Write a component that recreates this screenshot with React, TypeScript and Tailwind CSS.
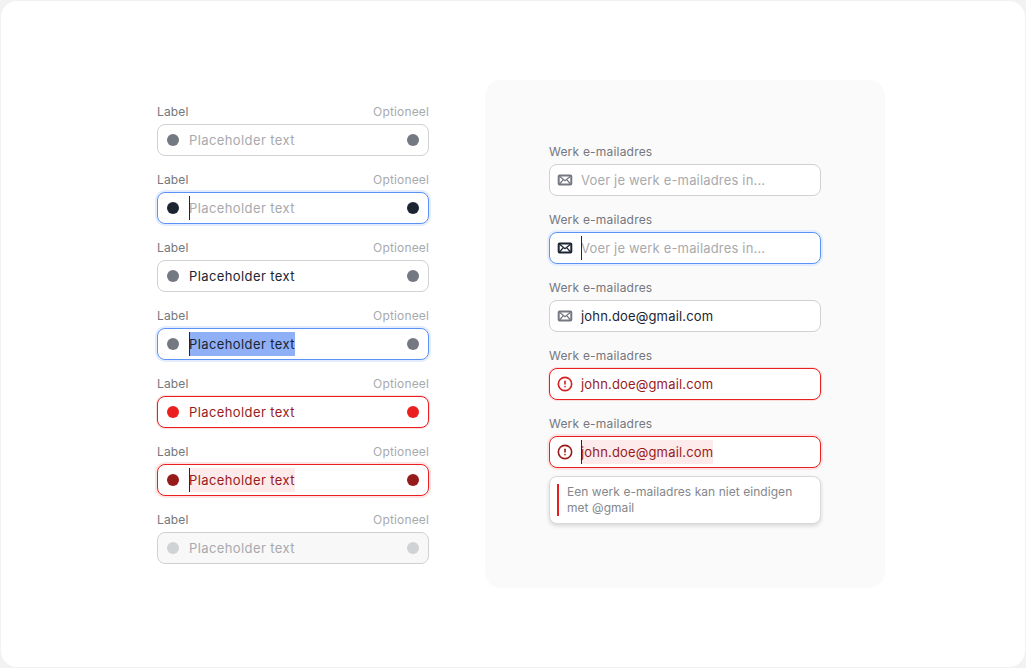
import { CircleAlert } from "lucide-react";

const font = { fontFamily: "Inter" };

function MailIcon({ className }: { className: string }) {
  return (
    <svg viewBox="0 0 16 16" className={className} fill="none">
      <rect x="1.7" y="3.4" width="12.6" height="9.2" rx="0.8" stroke="currentColor" strokeWidth="2" />
      <path d="M2.5 4.2l5.5 4.5 5.5-4.5M2.5 12l3.8-4.4M13.5 12L9.7 7.6" stroke="currentColor" strokeWidth="1.3" />
    </svg>
  );
}

function Caret() {
  return <span className="absolute left-0 top-0 h-[24px] w-px bg-[#1f2937]" />;
}

type LeftRow = {
  box: string;
  dot: string;
  text: string;
  caret?: boolean;
  hl?: string;
};

const leftRows: LeftRow[] = [
  { box: "border-[#d1d1d1] bg-white", dot: "bg-[#747881]", text: "text-[#a8a9ad]" },
  {
    box: "border-[#5b92f7] bg-white shadow-[0_0_0_2px_#e4edfd]",
    dot: "bg-[#1b2432]",
    text: "text-[#a8a9ad]",
    caret: true,
  },
  { box: "border-[#d1d1d1] bg-white", dot: "bg-[#747881]", text: "text-[#1b2432]" },
  {
    box: "border-[#5b92f7] bg-white shadow-[0_0_0_2px_#e4edfd]",
    dot: "bg-[#747881]",
    text: "text-[#1b2432]",
    caret: true,
    hl: "bg-[#8fb0f6]",
  },
  { box: "border-[#ea2020] bg-white shadow-[0_0_0_1px_#fbdcdc]", dot: "bg-[#ea2020]", text: "text-[#981b1b]" },
  {
    box: "border-[#ea2020] bg-white shadow-[0_0_0_2px_#fde3e3]",
    dot: "bg-[#961b1b]",
    text: "text-[#981b1b]",
    caret: true,
    hl: "bg-[#fdeaea]",
  },
  { box: "border-[#d1d1d1] bg-[#f8f8f8]", dot: "bg-[#d1d2d4]", text: "text-[#a8a9ad]" },
];

function LabelledRow({ row }: { row: LeftRow }) {
  return (
    <div className="flex flex-col gap-1">
      <div className="flex h-4 items-center justify-between text-[12px] leading-4 tracking-[0.15px]">
        <span className="text-[#74777d]">Label</span>
        <span className="text-[#a8aaae]">Optioneel</span>
      </div>
      <div className={`flex h-8 items-center justify-between rounded-lg border pl-[9px] pr-[9px] ${row.box}`}>
        <div className="flex items-center gap-[10px]">
          <span className={`h-3 w-3 rounded-full ${row.dot}`} />
          <span className={`relative h-6 text-[13px] leading-6 tracking-[0.4px] ${row.text} ${row.hl ?? ""}`}>
            {row.caret && <Caret />}
            Placeholder text
          </span>
        </div>
        <span className={`h-3 w-3 rounded-full ${row.dot}`} />
      </div>
    </div>
  );
}

type RightRow = {
  box: string;
  icon: "mail" | "alert";
  iconColor: string;
  text: string;
  value: string;
  caret?: boolean;
  hl?: string;
};

const placeholder = "Voer je werk e-mailadres in...";
const email = "john.doe@gmail.com";

const rightRows: RightRow[] = [
  { box: "border-[#d1d1d1]", icon: "mail", iconColor: "text-[#747881]", text: "text-[#a8a9ad]", value: placeholder },
  {
    box: "border-[#5b92f7] shadow-[0_0_0_2px_#e4edfd]",
    icon: "mail",
    iconColor: "text-[#1b2432]",
    text: "text-[#a8a9ad]",
    value: placeholder,
    caret: true,
  },
  { box: "border-[#d1d1d1]", icon: "mail", iconColor: "text-[#747881]", text: "text-[#1b2432]", value: email },
  {
    box: "border-[#ea2020] shadow-[0_0_0_1px_#fbdcdc]",
    icon: "alert",
    iconColor: "text-[#d42020]",
    text: "text-[#981b1b]",
    value: email,
  },
  {
    box: "border-[#ea2020] shadow-[0_0_0_2px_#fde3e3]",
    icon: "alert",
    iconColor: "text-[#981b1b]",
    text: "text-[#981b1b]",
    value: email,
    caret: true,
    hl: "bg-[#fdeaea]",
  },
];

function EmailRow({ row }: { row: RightRow }) {
  return (
    <div className="flex flex-col gap-1">
      <div className="flex h-4 items-center text-[12px] leading-4 tracking-[0.2px] text-[#74777d]">
        Werk e-mailadres
      </div>
      <div className={`flex h-8 items-center gap-2 rounded-lg border bg-white pl-[7px] ${row.box}`}>
        <span className={`flex h-4 w-4 items-center justify-center ${row.iconColor}`}>
          {row.icon === "mail" ? (
            <MailIcon className="h-4 w-4" />
          ) : (
            <CircleAlert className="h-[16px] w-[16px]" strokeWidth={2.4} />
          )}
        </span>
        <span className={`relative h-6 text-[13px] leading-6 tracking-[0.17px] ${row.text} ${row.hl ?? ""}`}>
          {row.caret && <Caret />}
          {row.value}
        </span>
      </div>
    </div>
  );
}

export default function App() {
  return (
    <div className="h-[668px] w-[1026px] bg-[#f2f2f2] p-px" style={font}>
      <div className="flex h-full items-center gap-14 rounded-2xl bg-white pl-[156px]">
        <div className="flex w-[272px] flex-col gap-4">
          {leftRows.map((row, i) => (
            <LabelledRow key={i} row={row} />
          ))}
        </div>
        <div className="flex w-[400px] flex-col gap-4 rounded-2xl bg-[#fafafa] px-16 py-16">
          {rightRows.map((row, i) => (
            <EmailRow key={i} row={row} />
          ))}
          <div className="-mt-2 flex h-12 gap-2 rounded-lg border border-[#d9d9d9] bg-white px-[7px] py-[7px] shadow-[0_2px_4px_rgba(0,0,0,0.14)]">
            <span className="w-0.5 shrink-0 bg-[#e81e1e]" />
            <p className="text-[12px] leading-4 tracking-[0.05px] text-[#84878c]">
              Een werk e-mailadres kan niet eindigen met @gmail
            </p>
          </div>
        </div>
      </div>
    </div>
  );
}
